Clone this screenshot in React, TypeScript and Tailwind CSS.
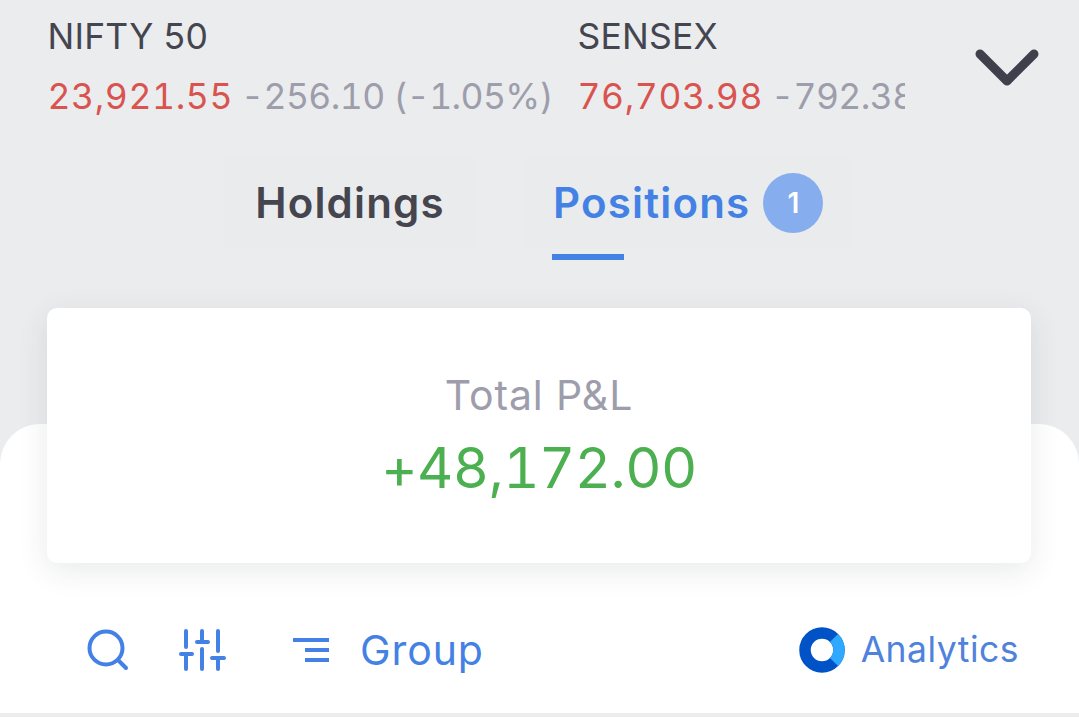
const inter = { fontFamily: "Inter, sans-serif" };

function Index({ name, price, change, width }: { name: string; price: string; change: string; width: string }) {
  return (
    <div className={`${width} shrink-0`}>
      <div className="text-[35.5px] leading-[40px] text-[#44454f] tracking-[0.2px]">{name}</div>
      <div className="mt-[18px] overflow-hidden whitespace-nowrap text-[35.5px] leading-[44px] tracking-[0.6px] tabular-nums">
        <span className="text-[#d9534f]">{price}</span>
        <span className="ml-[8px] tracking-[-0.6px] text-[#9d9dab]">{change}</span>
      </div>
    </div>
  );
}

function SearchIcon() {
  return (
    <svg width="42" height="42" viewBox="0 0 42 42" fill="none" stroke="#4481e4" strokeWidth="4" strokeLinecap="round">
      <circle cx="19" cy="19" r="16.5" />
      <path d="M31 31l8 8" />
    </svg>
  );
}

function Sliders() {
  return (
    <svg width="48" height="42" viewBox="0 0 48 42" fill="none" stroke="#4481e4" strokeWidth="4" strokeLinecap="round">
      <path d="M8 2v16M8 25v15M3 25h11M24 2v11M24 20v20M19 13h11M40 2v20M40 29v11M34 29h12" />
    </svg>
  );
}

function Lines() {
  return (
    <svg width="36" height="24" viewBox="0 0 36 24" fill="#4481e4">
      <rect x="0" y="0" width="36" height="4" />
      <rect x="12" y="10" width="24" height="4" />
      <rect x="12" y="20" width="24" height="4" />
    </svg>
  );
}

function AnalyticsLogo() {
  return (
    <svg width="46" height="46" viewBox="0 0 46 46" fill="none">
      <circle cx="23" cy="23" r="17" stroke="#0053c7" strokeWidth="11.5" />
      <path d="M35 11 A17 17 0 0 1 35 35" stroke="#2fa8ff" strokeWidth="11.5" />
    </svg>
  );
}

export default function App() {
  return (
    <div className="relative h-[717px] w-[1079px] overflow-hidden bg-[#ebecee]" style={inter}>
      {/* white sheet behind the card */}
      <div className="absolute inset-x-0 top-[424px] bottom-0 rounded-t-[40px] border-b-[4px] border-[#ececec] bg-white" />

      <div className="relative">
        <div className="flex pl-[47.5px] pt-[17px]">
          <Index name="NIFTY 50" price="23,921.55" change="-256.10 (-1.05%)" width="w-[530px]" />
          <Index name="SENSEX" price="76,703.98" change="-792.38 (-1.02%)" width="w-[327.5px]" />
          <svg className="ml-[70px] mt-[32px]" width="64" height="38" viewBox="0 0 64 38" fill="none" stroke="#3f404c" strokeWidth="9" strokeLinecap="round" strokeLinejoin="round">
            <path d="M5 5l27 27L59 5" />
          </svg>
        </div>

        <div className="mt-[38px] flex justify-center gap-[46px] pr-[5px]">
          <div className="flex h-[92px] w-[254px] justify-center rounded-[4px] bg-[#eaebed] pt-[22px]">
            <span className="text-[42px] leading-[48px] font-semibold tracking-[1.2px] text-[#44454f]">Holdings</span>
          </div>
          <div className="relative flex h-[92px] w-[328px] rounded-[4px] bg-[#eaebed] pl-[30px] pt-[22px]">
            <span className="text-[42px] leading-[48px] font-semibold tracking-[1.2px] text-[#4481e4]">Positions</span>
            <span className="ml-[13px] -mt-[6px] flex h-[60px] w-[60px] items-center justify-center rounded-full bg-[#86aeef] text-[28px] font-semibold text-white">1</span>
            <div className="absolute left-[29px] top-[97px] h-[6px] w-[72px] bg-[#4481e4]" />
          </div>
        </div>

        <div className="mx-[47px] mt-[59px] flex h-[255px] w-[984px] flex-col items-center rounded-[10px] bg-white pt-[64px] shadow-[0_8px_30px_rgba(40,45,60,0.10)]">
          <div className="text-[41px] leading-[46px] tracking-[0.9px] text-[#9d9dab]">Total P&amp;L</div>
          <div className="mt-[18px] text-[56px] leading-[64px] tracking-[-0.5px] text-[#4caf50] tabular-nums">+48,172.00</div>
        </div>

        <div className="mt-[64px] flex items-center pl-[87px] pr-[60px]">
          <SearchIcon />
          <div className="ml-[49px]"><Sliders /></div>
          <div className="ml-[67px]"><Lines /></div>
          <span className="ml-[31px] text-[41px] leading-[46px] tracking-[0.9px] text-[#4481e4]">Group</span>
          <div className="ml-auto flex items-center gap-[16px]">
            <AnalyticsLogo />
            <span className="text-[35.5px] leading-[42px] tracking-[0.5px] text-[#4f82dc]">Analytics</span>
          </div>
        </div>
      </div>
    </div>
  );
}
